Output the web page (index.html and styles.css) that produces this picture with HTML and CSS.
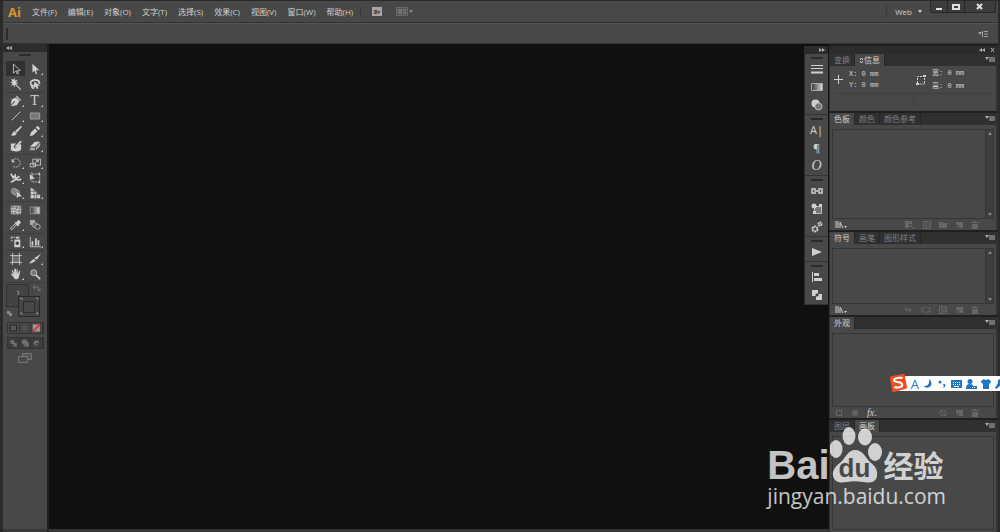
FILE: index.html
```
<!DOCTYPE html>
<html lang="zh-CN">
<head>
    <meta charset="UTF-8">
    <meta name="viewport" content="width=device-width, initial-scale=1.0">
    <title>Ai</title>
    <link rel="stylesheet" href="styles.css">
</head>
<body>
    <!-- Shared icons -->
    <svg class="sprite" aria-hidden="true">
        <symbol id="i-menu" viewBox="0 0 10 7"><path d="M0 1h4L2 4z"/><path d="M4 1h6v5H4z" opacity=".5"/></symbol>
        <symbol id="i-lib" viewBox="0 0 12 8"><path d="M1 0v7M3 0v7M5 2v5M5 1l3 6" fill="none" stroke="currentColor"/><path d="M9 5h3l-1.500 2z"/></symbol>
        <symbol id="i-new" viewBox="0 0 8 8"><path d="M1 1h7v6H4V4H1z"/><path d="M1 5h2v2z"/></symbol>
        <symbol id="i-trash" viewBox="0 0 8 8"><path d="M3 0h2v1h3v1H0V1h3zM1 3h6v5H1z"/></symbol>
        <symbol id="i-list" viewBox="0 0 8 8"><path d="M.5.5h7v7h-7zM3 1v6M4 3h3M4 5h3" fill="none" stroke="currentColor"/></symbol>
        <symbol id="i-left" viewBox="0 0 6 4"><path d="M3 0v4L0 2zM6 0v4L3 2z"/></symbol>
        <symbol id="i-right" viewBox="0 0 6 4"><path d="M0 0v4l3-2zM3 0v4l3-2z"/></symbol>
        <linearGradient id="fade"><stop stop-color="#333"/><stop offset="1" stop-color="#ddd"/></linearGradient>
    </svg>

    <header class="title-bar">
        <span class="logo">Ai</span>
        <nav class="menu">
            <button type="button">文件(F)</button>
            <button type="button">编辑(E)</button>
            <button type="button">对象(O)</button>
            <button type="button">文字(T)</button>
            <button type="button">选择(S)</button>
            <button type="button">效果(C)</button>
            <button type="button">视图(V)</button>
            <button type="button">窗口(W)</button>
            <button type="button">帮助(H)</button>
        </nav>
        <div class="app-buttons">
            <button type="button" class="bridge" aria-label="Bridge">Br</button>
            <button type="button" aria-label="排列文档"><svg width="17" height="10" viewBox="0 0 17 10"><path d="M.5.5h11v8H.5z" fill="#555" stroke="#6a6a6a"/><path d="M2 2h4v5H2zM7 2h3v2H7zM7 5h3v2H7z" fill="#737373"/><path d="M13 3h4l-2 3z" fill="#888"/></svg></button>
        </div>
        <button type="button" class="workspace-switch">Web <svg width="4" height="3" viewBox="0 0 4 3"><path d="M0 0h4L2 3z"/></svg></button>
        <div class="window-buttons">
            <button type="button" aria-label="最小化"><svg width="8" height="8" viewBox="0 0 8 8"><path d="M1 5h6v2H1z"/></svg></button>
            <button type="button" aria-label="最大化"><svg width="8" height="8" viewBox="0 0 8 8"><path d="M1 2h6v4H1z" fill="none" stroke="currentColor" stroke-width="2"/></svg></button>
            <button type="button" class="close" aria-label="关闭"><svg width="8" height="8" viewBox="0 0 8 8"><path d="M1 1l5 5M6 1L1 6" stroke="currentColor" stroke-width="2"/></svg></button>
        </div>
    </header>

    <div class="control-bar">
        <span class="grip"></span>
        <button type="button" aria-label="控制面板菜单"><svg width="10" height="8" viewBox="0 0 10 8"><path d="M0 2h4L2 5z"/><path d="M4.500 1v6M6 1.500h4M6 4h4M6 6.500h4" stroke="currentColor" fill="none"/></svg></button>
    </div>

    <main class="workspace">
        <aside class="toolbar">
            <div class="strip"><svg width="6" height="4"><use href="#i-left"/></svg></div>
            <span class="handle"></span>
            <div class="tools">
                <div class="tool-group">
                    <button type="button" class="active" aria-label="选择工具"><svg viewBox="0 0 14 14"><path d="M4 1v11l3-3 1.500 4 1.500-.6L8.500 9H12z" fill="#333" stroke="#ccc"/></svg></button>
                    <button type="button" class="more" aria-label="直接选择工具"><svg viewBox="0 0 14 14"><path d="M4 1v10l2.500-2 1.500 4 1.500-.6L8 8.500h4z"/></svg></button>
                    <button type="button" aria-label="魔棒工具"><svg viewBox="0 0 14 14"><path d="M5 0l1 3 3-1-2 3 3 1-3 1 6 6-1 1-6-6-1 3-1-3-3 1 2-3-3-1 3-1-2-3 3 1z"/></svg></button>
                    <button type="button" aria-label="套索工具"><svg viewBox="0 0 14 14"><path d="M7 9H4C1 8 1 4 4 3c4-2 9 0 8 4M4 8c-2 2 0 4 2 4" fill="none" stroke="currentColor" stroke-width="2"/><path d="M6 4v8l2-2 1 3 2-1-1-3h3z"/></svg></button>
                </div>
                <div class="tool-group">
                    <button type="button" class="more" aria-label="钢笔工具"><svg viewBox="0 0 14 14"><path d="M8 1l5 5-1 1-5-5zM7 3l4 4-3 5-7 1 5-5-1-1-4 5 1-7z"/></svg></button>
                    <button type="button" class="more letter" aria-label="文字工具">T</button>
                    <button type="button" class="more" aria-label="直线段工具"><svg viewBox="0 0 14 14"><path d="M2 12L12 2" stroke="currentColor"/></svg></button>
                    <button type="button" class="more" aria-label="矩形工具"><svg viewBox="0 0 14 14"><path d="M1.500 3.500h11v7h-11z" fill="#777" stroke="#aaa"/></svg></button>
                    <button type="button" aria-label="画笔工具"><svg viewBox="0 0 14 14"><path d="M13 1l1 1-6 7-2-2zM5 7l3 3c-2 3-4 3-7 2 2-1 2-4 4-5z"/></svg></button>
                    <button type="button" class="more" aria-label="铅笔工具"><svg viewBox="0 0 14 14"><path d="M10 1l3 3-2 2-3-3zM7 4l3 3-5 5-4 1 1-4z"/></svg></button>
                    <button type="button" aria-label="斑点画笔工具"><svg viewBox="0 0 14 14"><path d="M1 4h6l-3 4 2 2 5-5h2v6c-2 3-9 3-12 1z"/><path d="M12 1l2 1-6 6-3 1 2-3z"/></svg></button>
                    <button type="button" class="more" aria-label="橡皮擦工具"><svg viewBox="0 0 14 14"><path d="M7 2h6L7 8H1z"/><path d="M1 9h6v3H1zM8 9l5-6v4l-5 5z" opacity=".7"/></svg></button>
                </div>
                <div class="tool-group">
                    <button type="button" class="more" aria-label="旋转工具"><svg viewBox="0 0 14 14"><path d="M3 4c3-4 9-1 9 3s-6 7-9 3" fill="none" stroke="currentColor" stroke-dasharray="2 1"/><path d="M2 2v4h4z"/></svg></button>
                    <button type="button" class="more" aria-label="比例缩放工具"><svg viewBox="0 0 14 14"><path d="M4.500 2.500h9v7h-9zM1.500 7.500h6v4h-6zM7 7l4-3M8 4h3v2" fill="none" stroke="currentColor"/></svg></button>
                    <button type="button" class="more" aria-label="宽度工具"><svg viewBox="0 0 14 14"><path d="M1 2l3 5 2-3 1 4 4-3M1 11c3 2 4-4 8-2 2 1 3 0 4-1" fill="none" stroke="currentColor" stroke-width="2"/></svg></button>
                    <button type="button" aria-label="自由变换工具"><svg viewBox="0 0 14 14"><path d="M3.500 2.500h9v9h-9z" fill="none" stroke="currentColor" stroke-dasharray="2 1"/><path d="M1 2v8l2-2h4zM2 1h2v2zM11 1h2v2h-2zM11 11h2v2h-2z"/></svg></button>
                    <button type="button" class="more" aria-label="形状生成器工具"><svg viewBox="0 0 14 14"><circle cx="5" cy="5" r="3.500" fill="#777" stroke="#aaa"/><circle cx="8" cy="7" r="3.500" fill="none" stroke="#aaa"/><path d="M8 5v8l2-2h4z"/></svg></button>
                    <button type="button" class="more" aria-label="透视网格工具"><svg viewBox="0 0 14 14"><path d="M2 1l4 2v10H2zM6 4l3 2v7H6zM9 8l4 1v4H9z"/><path d="M2 5h5M2 9h11M6 2v11M9 5v8" stroke="#666"/></svg></button>
                </div>
                <div class="tool-group">
                    <button type="button" aria-label="网格工具"><svg viewBox="0 0 14 14"><path d="M1.500 2.500h11v9h-11z" fill="#777" stroke="#aaa"/><path d="M5 2c3 3-3 6 0 10M9 2c3 3-3 6 0 10M1 6c4-3 7 3 12 0M1 9c4-3 7 3 12 0" fill="none" stroke="#ddd"/></svg></button>
                    <button type="button" aria-label="渐变工具"><svg viewBox="0 0 14 14"><path d="M1.500 3.500h11v8h-11z" fill="url(#fade)" stroke="#999"/></svg></button>
                    <button type="button" class="more" aria-label="吸管工具"><svg viewBox="0 0 14 14"><path d="M10 1l3 3-3 3-3-3z"/><path d="M6 4l4 4" stroke="currentColor" stroke-width="2"/><path d="M8 6l-5 6H1v-2l6-5" fill="none" stroke="currentColor"/></svg></button>
                    <button type="button" aria-label="混合工具"><svg viewBox="0 0 14 14"><path d="M1 1h6v6H1z" opacity=".7"/><circle cx="7" cy="7" r="3" fill="#666" stroke="#aaa"/><circle cx="10" cy="9" r="3" fill="#484848" stroke="#bbb"/></svg></button>
                </div>
                <div class="tool-group">
                    <button type="button" class="more" aria-label="符号喷枪工具"><svg viewBox="0 0 14 14"><path d="M5 4h7v9H5zM7 1h4v2H7zM1 1h2v2H1zM4 1h2v1H4zM1 5h2v1H1z"/><circle cx="8.500" cy="8.500" r="2" fill="#444"/></svg></button>
                    <button type="button" class="more" aria-label="柱形图工具"><svg viewBox="0 0 14 14"><path d="M1.500 1v11.500H14" fill="none" stroke="currentColor"/><path d="M3 6h2v5H3zM7 3h2v8H7zM10 5h2v6h-2z"/></svg></button>
                </div>
                <div class="tool-group">
                    <button type="button" aria-label="画板工具"><svg viewBox="0 0 14 14"><path d="M3 3h8v8H3z" fill="#707070"/><path d="M3 0v14M11 0v14M0 3h14M0 11h14" stroke="currentColor"/></svg></button>
                    <button type="button" class="more" aria-label="切片工具"><svg viewBox="0 0 14 14"><path d="M14 1L9 8 6 6zM5 7l3 2-5 3H0z"/></svg></button>
                    <button type="button" class="more" aria-label="抓手工具"><svg viewBox="0 0 14 14"><path d="M3 2l2 4V1h2v5l1-5 1 1v5l2-4 1 1-2 8-2 1H6L1 7l1-1 2 2-2-5z"/></svg></button>
                    <button type="button" aria-label="缩放工具"><svg viewBox="0 0 14 14"><circle cx="5.500" cy="5.500" r="3.500" fill="#777" stroke="#ccc"/><path d="M8 8l5 5" stroke="currentColor" stroke-width="2"/></svg></button>
                </div>
            </div>
            <svg class="fill-stroke" width="38" height="36" viewBox="0 0 38 36" role="img" aria-label="填色和描边">
                <path d="M.5 1.500h22v22H.5z" fill="#434343" stroke="#303030"/>
                <path d="M11 9c1-2 3 0 1 2v1" fill="none" stroke="#999"/>
                <path d="M12.500 13.500h21v20h-21z" fill="#444" stroke="#292929"/>
                <path d="M17.500 18.500h11v11h-11z" fill="#484848" stroke="#2c2c2c"/>
                <path d="M14 15h2v2M30 15h2v2M14 30h2v2M30 30h2v2" fill="none" stroke="#888"/>
                <path d="M28 4h3c2 0 2 2 2 4M29 2l-2 2 2 2M31 6l2 2 2-2" fill="none" stroke="#777"/>
                <path d="M1 28h3v3H1zM3 30h3v3H3z" fill="#888"/>
            </svg>
            <div class="modes">
                <button type="button" aria-label="颜色"><svg viewBox="0 0 12 10"><path d="M2.500 1.500h7v7h-7z" fill="#555" stroke="#222"/></svg></button>
                <button type="button" aria-label="渐变"><svg viewBox="0 0 12 10"><path d="M2.500 1.500h7v7h-7z" fill="#505050" stroke="#404040"/></svg></button>
                <button type="button" aria-label="无"><svg viewBox="0 0 12 10"><path d="M2 1h8v8H2z" fill="#999"/><path d="M2 9l8-8" stroke="#d33" stroke-width="2"/></svg></button>
            </div>
            <div class="modes draw">
                <button type="button" aria-label="正常绘图"><svg viewBox="0 0 12 10"><circle cx="5" cy="4" r="2.500"/><path d="M6 5h4v4H6z"/></svg></button>
                <button type="button" aria-label="背面绘图"><svg viewBox="0 0 12 10"><path d="M5 4h5v5H5z"/><circle cx="5" cy="4" r="3"/></svg></button>
                <button type="button" aria-label="内部绘图"><svg viewBox="0 0 12 10"><circle cx="6" cy="5" r="3"/><path d="M6 5h2v2H6z" fill="#333"/></svg></button>
            </div>
            <button type="button" class="screen-mode" aria-label="更改屏幕模式"><svg width="14" height="11" viewBox="0 0 14 11"><path d="M4.500.5h9v6h-9z" fill="#555" stroke="#777"/><path d="M.5 3.500h9v6h-9z" fill="#4c4c4c" stroke="#777"/></svg></button>
        </aside>

        <div class="canvas">
            <aside class="dock">
                <div class="strip"><svg width="6" height="4"><use href="#i-right"/></svg></div>
                <div class="dock-group">
                    <button type="button" aria-label="描边"><svg viewBox="0 0 12 12"><path d="M0 2.500h12M0 5.500h12" stroke="currentColor"/><path d="M0 9.500h12" stroke="currentColor" stroke-width="2"/></svg></button>
                    <button type="button" aria-label="渐变"><svg viewBox="0 0 12 12"><path d="M.5 2.500h11v7H.5z" fill="url(#fade)" stroke="#aaa"/></svg></button>
                    <button type="button" aria-label="透明度"><svg viewBox="0 0 12 12"><circle cx="4.500" cy="4.500" r="4"/><circle cx="7.500" cy="7.500" r="3.500" fill="#777" stroke="#bbb"/></svg></button>
                </div>
                <div class="dock-group">
                    <button type="button" class="char" aria-label="字符">A|</button>
                    <button type="button" class="char" aria-label="段落">¶</button>
                    <button type="button" class="char open-type" aria-label="OpenType">O</button>
                </div>
                <div class="dock-group">
                    <button type="button" aria-label="链接"><svg viewBox="0 0 12 12"><path d="M5 4H1v4h4M7 4h4v4H7M3 6h6" fill="none" stroke="currentColor" stroke-width="1.500"/></svg></button>
                    <button type="button" aria-label="符号"><svg viewBox="0 0 12 12"><path d="M3.500 3.500h7v7h-7z" fill="#777" stroke="#bbb"/><circle cx="3" cy="3" r="2.500"/><path d="M8 1h3v3H8zM2 8h3v3H2z"/></svg></button>
                    <button type="button" aria-label="设置"><svg viewBox="0 0 12 12"><circle cx="4" cy="8" r="2.500" fill="none" stroke="currentColor" stroke-width="2" stroke-dasharray="2 .6"/><circle cx="9" cy="3" r="1.500" fill="none" stroke="currentColor" stroke-width="2" stroke-dasharray="1.500 .5"/></svg></button>
                </div>
                <div class="dock-group">
                    <button type="button" aria-label="动作"><svg viewBox="0 0 12 12"><path d="M1 2l10 4-10 4z"/></svg></button>
                </div>
                <div class="dock-group">
                    <button type="button" aria-label="对齐"><svg viewBox="0 0 12 12"><path d="M1 1h1v10H1zM3 2h5v3H3zM3 7h8v3H3z"/></svg></button>
                    <button type="button" aria-label="路径查找器"><svg viewBox="0 0 12 12"><path d="M1 1h6v6H1z"/><path d="M5 5h6v6H5z"/><path d="M5 5h2v2H5z" fill="#444" stroke="#444"/></svg></button>
                </div>
            </aside>
        </div>

        <aside class="panels">
            <div class="strip">
                <svg width="6" height="4"><use href="#i-left"/></svg>
                <svg width="5" height="4" viewBox="0 0 5 4"><path d="M1 0l3 4M4 0L1 4" stroke="currentColor"/></svg>
            </div>
            <section class="panel">
                <div class="tabs">
                    <button type="button">变换</button>
                    <button type="button" class="current"><svg width="5" height="7" viewBox="0 0 5 7"><path d="M1 3l1.500-2L4 3M1 4l1.500 2L4 4" fill="none" stroke="currentColor"/></svg>信息</button>
                    <svg class="panel-menu" width="10" height="7"><use href="#i-menu"/></svg>
                </div>
                <div class="info">
                    <svg width="9" height="9" viewBox="0 0 9 9"><path d="M4.500 0v9M0 4.500h9" stroke="currentColor"/></svg>
                    <div class="values"><span>X: 0 mm</span><span>Y: 0 mm</span></div>
                    <svg width="10" height="10" viewBox="0 0 10 10"><path d="M1.500 8V1.500H8M8.500 3v6H2" fill="none" stroke="currentColor" stroke-dasharray="2 1"/><path d="M0 8h3v2H0zM7 0h3v2H7z"/></svg>
                    <div class="values size"><span>宽: 0 mm</span><span>高: 0 mm</span></div>
                </div>
                <div class="info-extra"></div>
            </section>
            <section class="panel">
                <div class="tabs">
                    <button type="button" class="current">色板</button>
                    <button type="button">颜色</button>
                    <button type="button">颜色参考</button>
                    <svg class="panel-menu" width="10" height="7"><use href="#i-menu"/></svg>
                </div>
                <div class="list swatches"><span class="scroll"></span></div>
                <div class="actions">
                    <svg class="on" width="12" height="8"><use href="#i-lib"/></svg>
                    <svg class="first" width="10" height="8" viewBox="0 0 10 8"><path d="M0 0h7v3H4v4H0zM5 4h2v2H5zM7 6h3L8.500 8z"/></svg>
                    <svg width="8" height="8"><use href="#i-list"/></svg>
                    <svg width="8" height="8" viewBox="0 0 8 8"><path d="M0 1h3l1 1h4v5H0z"/></svg>
                    <svg width="8" height="8"><use href="#i-new"/></svg>
                    <svg width="8" height="8"><use href="#i-trash"/></svg>
                </div>
            </section>
            <section class="panel">
                <div class="tabs">
                    <button type="button" class="current">符号</button>
                    <button type="button">画笔</button>
                    <button type="button">图形样式</button>
                    <svg class="panel-menu" width="10" height="7"><use href="#i-menu"/></svg>
                </div>
                <div class="list symbols"><span class="scroll"></span></div>
                <div class="actions">
                    <svg class="on" width="12" height="8"><use href="#i-lib"/></svg>
                    <svg class="first" width="8" height="8" viewBox="0 0 8 8"><path d="M1 1v3h5M4 2l2 2-2 2" fill="none" stroke="currentColor"/></svg>
                    <svg width="10" height="8" viewBox="0 0 10 8"><path d="M4 2H1v4h3M6 2h3v4H6M4 0v1M6 7v1" fill="none" stroke="currentColor"/></svg>
                    <svg width="8" height="8"><use href="#i-list"/></svg>
                    <svg width="8" height="8"><use href="#i-new"/></svg>
                    <svg width="8" height="8"><use href="#i-trash"/></svg>
                </div>
            </section>
            <section class="panel">
                <div class="tabs">
                    <button type="button" class="current">外观</button>
                    <svg class="panel-menu" width="10" height="7"><use href="#i-menu"/></svg>
                </div>
                <div class="list appearance"></div>
                <div class="actions">
                    <svg width="8" height="8" viewBox="0 0 8 8"><path d="M1.500 1.500h5v5h-5z" fill="none" stroke="currentColor"/></svg>
                    <svg width="8" height="8" viewBox="0 0 8 8"><path d="M1 1h6v6H1z" opacity=".5"/><path d="M2 2h4v4H2z"/></svg>
                    <button type="button" class="fx" aria-label="添加新效果"><i>fx</i>.</button>
                    <svg class="first" width="8" height="8" viewBox="0 0 8 8"><circle cx="4" cy="4" r="3" fill="none" stroke="currentColor"/><path d="M2 2l4 4" stroke="currentColor"/></svg>
                    <svg width="8" height="8"><use href="#i-new"/></svg>
                    <svg width="8" height="8"><use href="#i-trash"/></svg>
                </div>
            </section>
            <section class="panel grow">
                <div class="tabs">
                    <button type="button">图层</button>
                    <button type="button" class="current">画板</button>
                    <svg class="panel-menu" width="10" height="7"><use href="#i-menu"/></svg>
                </div>
                <div class="list artboards"></div>
            </section>
        </aside>
    </main>

    <!-- Input method bar -->
    <div class="ime">
        <svg class="ime-logo" width="18" height="18" viewBox="0 0 18 18"><path d="M3 2l11-2q2 0 2 2l2 11q0 2-2 2L5 18q-2 0-2-2L1 4q0-2 2-2z" fill="#f04e23"/><path d="M13.500 4C9 3 4.500 4.500 5 6.500c.5 2 8 1 8.300 4 .2 3-5.300 3.500-8 2.500" fill="none" stroke="#fff" stroke-width="2"/></svg>
        <span class="ime-mode">A</span>
        <svg width="10" height="10" viewBox="0 0 10 10"><path d="M6 0c6 5 0 12-6 7 4 1 7-2 6-7z"/></svg>
        <svg width="10" height="10" viewBox="0 0 10 10"><circle cx="3" cy="3" r="1.500"/><path d="M6 5h2c1 2 0 3-2 4 1-2 1-2 0-4z"/></svg>
        <svg width="11" height="10" viewBox="0 0 11 10"><path d="M0 1h11v8H0z"/><path d="M2 3.500h7M2 5.500h7" stroke="#fff" stroke-dasharray="1 1"/><path d="M3 7.500h5" stroke="#fff"/></svg>
        <svg width="11" height="10" viewBox="0 0 11 10"><circle cx="4" cy="2.500" r="2.500"/><path d="M0 9q0-4 4-4 3 0 3 2h4v3H0z"/><path d="M6 8.500h4" stroke="#fff" stroke-dasharray="1 1"/></svg>
        <svg width="10" height="10" viewBox="0 0 10 10"><path d="M3 0q2 2 4 0l3 2-1 3-1-1v6H2V4L1 5 0 2z"/></svg>
        <svg width="5" height="10" viewBox="0 0 5 10"><path d="M0 9l3-5c-1-2 0-3 2-4v7L1 10z"/></svg>
    </div>

    <!-- Watermark -->
    <div class="watermark">
        <div class="mark-logo">
            <span class="bai">Bai</span>
            <span class="paw">
                <svg width="54" height="58" viewBox="0 0 54 58" aria-hidden="true">
                    <ellipse cx="6" cy="23" rx="6.500" ry="9"/><ellipse cx="19" cy="10" rx="6.500" ry="9"/><ellipse cx="35" cy="11" rx="7" ry="8.500"/><ellipse cx="45" cy="26" rx="7" ry="9"/>
                    <path d="M25 24c8 0 10 7 15 12 5 4 8 8 7 14-1 7-8 7-14 6-6-1-11-1-16 0-6 1-12 1-14-6-1-6 3-10 8-14 5-5 7-12 14-12z"/>
                </svg>
                <span class="du">du</span>
            </span>
            <span class="jingyan">经验</span>
        </div>
        <div class="mark-url">jingyan.baidu.com</div>
    </div>
</body>
</html>
```
FILE: styles.css
```
* {
    box-sizing: border-box;
}
body {
    margin: 0;
    height: 100vh;
    display: flex;
    flex-direction: column;
    position: relative;
    overflow: hidden;
    padding: 0 2px 0 3px;
    background: #2b2b2b;
    color: #d0d0d0;
    font-family: "Open Sans", "Noto Sans CJK SC", sans-serif;
    font-size: 8px;
    line-height: 12px;
}
button {
    margin: 0;
    padding: 0;
    border: 0;
    background: none;
    color: inherit;
    font: inherit;
    white-space: nowrap;
}
svg {
    display: block;
    flex: none;
    fill: currentColor;
}
.sprite {
    position: absolute;
    width: 0;
    height: 0;
}

/* Title bar */
.title-bar {
    height: 23px;
    flex: none;
    display: flex;
    align-items: center;
    padding: 0 2px 0 5px;
    background: #484848;
    border-top: 1px solid #2a2a2a;
    border-bottom: 1px solid #333;
}
.logo {
    width: 24px;
    color: #d9962f;
    font-size: 13px;
    font-weight: bold;
}
.menu {
    display: flex;
    gap: 11px;
}
.app-buttons {
    display: flex;
    align-items: center;
    gap: 14px;
    margin-left: 7px;
    padding-left: 11px;
    border-left: 1px solid #3a3a3a;
}
.bridge {
    width: 10px;
    height: 9px;
    background: #a5a5a5;
    color: #333;
    font-size: 6px;
    font-weight: bold;
    line-height: 8px;
}
.workspace-switch {
    display: flex;
    align-items: center;
    gap: 6px;
    height: 13px;
    margin-left: auto;
    padding: 0 8px;
    border-left: 1px solid #3a3a3a;
}
.window-buttons {
    display: flex;
    align-self: flex-start;
    height: 12px;
    border: 1px solid #262626;
    border-top: 0;
    border-radius: 0 0 3px 3px;
    background: #3d3d3d;
    color: #e0e0e0;
}
.window-buttons button {
    width: 17px;
    display: flex;
    align-items: center;
    justify-content: center;
    border-right: 1px solid #262626;
}
.window-buttons .close {
    width: 30px;
    border-right: 0;
}

/* Control bar */
.control-bar {
    height: 21px;
    flex: none;
    display: flex;
    align-items: center;
    justify-content: space-between;
    padding: 0 10px 0 3px;
    background: #484848;
    border-top: 1px solid #555;
    border-bottom: 1px solid #333;
    color: #a0a0a0;
}
.grip {
    width: 2px;
    height: 12px;
    background: #2c2c2c;
}

/* Workspace */
.workspace {
    flex: 1;
    min-height: 0;
    display: flex;
    background: #202020;
}
.strip {
    height: 8px;
    display: flex;
    align-items: center;
    gap: 5px;
    padding: 0 3px;
    background: #2c2c2c;
    color: #aaa;
}
.canvas {
    flex: 1;
    display: flex;
    align-items: flex-start;
    justify-content: flex-end;
    background: #101010;
    border-bottom: 3px solid #383838;
}

/* Tools */
.toolbar {
    width: 44px;
    margin-right: 2px;
    background: #484848;
    border-bottom: 3px solid #383838;
}
.handle {
    display: block;
    width: 12px;
    height: 2px;
    margin: 2px auto 5px;
    background: #2c2c2c;
}
.tools {
    padding: 0 3px;
}
.tool-group {
    display: grid;
    grid-template-columns: 1fr 1fr;
    padding-bottom: 1px;
    border-bottom: 1px solid #3c3c3c;
}
.tool-group button {
    height: 15px;
    display: flex;
    align-items: center;
    justify-content: center;
    position: relative;
}
.tool-group svg {
    width: 12px;
    height: 12px;
}
.tool-group .active {
    background: #303030;
}
.tool-group .letter {
    font-family: "Liberation Serif", serif;
    font-size: 14px;
}
.more::after {
    content: "";
    position: absolute;
    right: 1px;
    bottom: 1px;
    border-left: 2px solid transparent;
    border-bottom: 2px solid #ccc;
}
.fill-stroke {
    margin: 0 auto;
}
.modes {
    display: grid;
    grid-template-columns: 1fr 1fr 1fr;
    margin: 3px 3px 0 4px;
    border: 1px solid #333;
}
.modes button {
    height: 10px;
    border-right: 1px solid #333;
}
.modes svg {
    width: 100%;
    height: 10px;
}
.draw {
    background: #3c3c3c;
    color: #707070;
}
.screen-mode {
    display: block;
    margin: 4px auto 0;
}

/* Icon dock */
.dock {
    width: 24px;
    margin: 2px 1px 0 0;
    background: #484848;
    border-left: 1px solid #2c2c2c;
}
.dock .strip {
    justify-content: flex-end;
}
.dock-group {
    padding-top: 3px;
    border-bottom: 1px solid #333;
}
.dock-group::before {
    content: "";
    display: block;
    width: 12px;
    height: 2px;
    margin: 0 auto 1px;
    background: #2a2a2a;
}
.dock-group button {
    width: 100%;
    height: 18px;
    display: flex;
    align-items: center;
    justify-content: center;
}
.dock-group svg {
    width: 12px;
    height: 12px;
}
.dock-group .char {
    font-size: 11px;
}
.dock-group .open-type {
    font-family: "Liberation Serif", serif;
    font-style: italic;
    font-size: 14px;
}

/* Panels */
.panels {
    width: 169px;
    display: flex;
    flex-direction: column;
    margin-top: 2px;
}
.panels .strip {
    justify-content: flex-end;
    flex: none;
}
.panel {
    flex: none;
    margin-bottom: 2px;
    background: #484848;
    border-left: 1px solid #333;
    border-right: 2px solid #333;
}
.grow {
    flex: 1;
    display: flex;
    flex-direction: column;
    margin-bottom: 0;
}
.tabs {
    height: 12px;
    flex: none;
    display: flex;
    background: #303030;
    color: #808080;
}
.tabs button {
    display: flex;
    align-items: center;
    padding: 0 4px;
    border-right: 1px solid #262626;
}
.tabs .current {
    background: #484848;
    color: #d0d0d0;
}
.panel-menu {
    margin: 2px 1px 0 auto;
    color: #b0b0b0;
}
.info {
    height: 28px;
    display: flex;
    align-items: center;
    margin: 0 4px;
    border-bottom: 1px solid #404040;
    font-family: "Liberation Mono", "Noto Sans CJK SC", monospace;
    font-size: 7px;
}
.values {
    display: flex;
    flex-direction: column;
    flex: 1;
    padding-left: 6px;
    line-height: 11px;
}
.size {
    flex: none;
    width: 66px;
    line-height: 13px;
}
.info-extra {
    height: 17px;
    display: flex;
    padding: 2px 0 3px;
}
.info-extra::before {
    content: "";
    width: 50%;
    border-right: 1px solid #404040;
}
.list {
    display: flex;
    justify-content: flex-end;
    margin: 4px 2px 0;
    border: 1px solid #353535;
}
.swatches {
    height: 90px;
}
.symbols {
    height: 56px;
}
.appearance {
    height: 74px;
}
.artboards {
    flex: 1;
    margin-bottom: 2px;
}
.scroll {
    width: 8px;
    display: flex;
    flex-direction: column;
    justify-content: space-between;
    align-items: center;
    padding: 2px 0;
    background: #3e3e3e;
    border-left: 1px solid #353535;
}
.scroll::before,
.scroll::after {
    content: "";
    border: 2px solid transparent;
}
.scroll::before {
    border-top: 0;
    border-bottom: 3px solid #888;
}
.scroll::after {
    border-bottom: 0;
    border-top: 3px solid #888;
}
.actions {
    height: 11px;
    display: flex;
    align-items: center;
    gap: 8px;
    padding: 0 17px 0 5px;
    color: #666;
}
.actions .on,
.fx {
    color: #d0d0d0;
}
.actions .first {
    margin-left: auto;
}
.fx {
    font-family: "Liberation Serif", serif;
    font-size: 10px;
}

/* Input method bar */
.ime {
    position: absolute;
    top: 376px;
    right: 0;
    height: 15px;
    display: flex;
    align-items: center;
    gap: 4px;
    background: #fff;
    color: #1f74c4;
}
.ime-logo {
    margin: -2px 0 0 -9px;
}
.ime-mode {
    font-size: 13px;
}

/* Watermark */
.watermark {
    position: absolute;
    right: 54px;
    bottom: 24px;
    color: #fff;
    opacity: 0.75;
}
.mark-logo {
    display: flex;
    align-items: flex-end;
    height: 58px;
}
.bai {
    font-family: "Liberation Sans", sans-serif;
    font-size: 40px;
    font-weight: bold;
    line-height: 38px;
}
.paw {
    position: relative;
}
.du {
    position: absolute;
    left: 9px;
    bottom: 2px;
    color: #484848;
    font-family: "Liberation Sans", sans-serif;
    font-size: 26px;
    font-weight: bold;
    line-height: 28px;
}
.jingyan {
    font-family: "Noto Sans CJK SC", sans-serif;
    font-size: 30px;
    font-weight: bold;
    line-height: 40px;
}
.mark-url {
    font-size: 21px;
    line-height: 24px;
}
```
